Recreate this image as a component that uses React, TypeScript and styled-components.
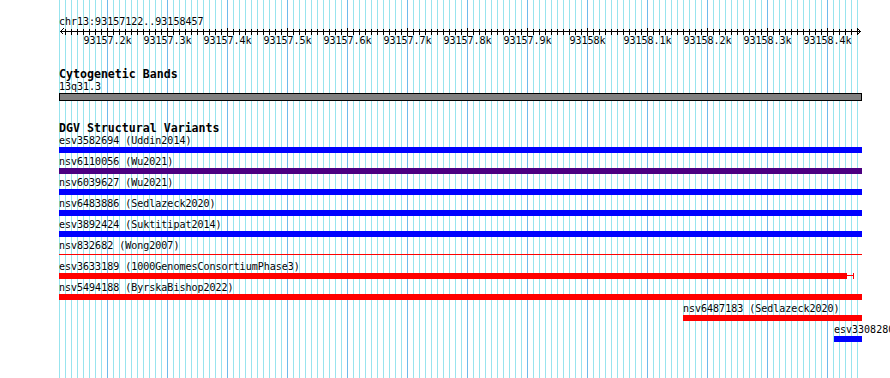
import React from 'react'
import styled, { createGlobalStyle } from 'styled-components'

// genome view: 93157122..93158457 drawn at 0.6 px/bp, view starts at x=59
const VIEW_X = 59
const VIEW_W = 803

type Feature = {
  label: string
  color: string
  x0: number
  x1: number
  thin?: boolean
  tail?: boolean
}

const features: Feature[] = [
  { label: 'esv3582694 (Uddin2014)', color: '#0000ff', x0: 59, x1: 862 },
  { label: 'nsv6110056 (Wu2021)', color: '#4b0082', x0: 59, x1: 862 },
  { label: 'nsv6039627 (Wu2021)', color: '#0000ff', x0: 59, x1: 862 },
  { label: 'nsv6483886 (Sedlazeck2020)', color: '#0000ff', x0: 59, x1: 862 },
  { label: 'esv3892424 (Suktitipat2014)', color: '#0000ff', x0: 59, x1: 862 },
  { label: 'nsv832682 (Wong2007)', color: '#ff0000', x0: 59, x1: 862, thin: true },
  { label: 'esv3633189 (1000GenomesConsortiumPhase3)', color: '#ff0000', x0: 59, x1: 847, tail: true },
  { label: 'nsv5494188 (ByrskaBishop2022)', color: '#ff0000', x0: 59, x1: 862 },
  { label: 'nsv6487183 (Sedlazeck2020)', color: '#ff0000', x0: 683, x1: 862 },
  { label: 'esv3308280 (Kidd2010)', color: '#0000ff', x0: 834, x1: 862 },
]

const tickLabels = [
  '93157.2k', '93157.3k', '93157.4k', '93157.5k', '93157.6k', '93157.7k', '93157.8k',
  '93157.9k', '93158k', '93158.1k', '93158.2k', '93158.3k', '93158.4k',
]

// every 10bp is 6px; labelled ticks fall on 48 + 60n
const isMajor = (x: number) => (x - 48) % 60 === 0

const GridLines: React.FC = () => {
  const lines = []
  for (let k = 0; k <= 133; k++) {
    const x = k * 6
    lines.push(
      <rect key={k} x={x} y={0} width={1} height={378} fill={isMajor(x) ? '#6fbaec' : '#98e4ee'} />
    )
  }
  return (
    <GridSvg width={VIEW_W} height={378} shapeRendering="crispEdges">
      {lines}
    </GridSvg>
  )
}

const Ruler: React.FC = () => {
  const ticks = []
  for (let k = 1; k <= 133; k++) {
    const x = k * 6
    const major = isMajor(x)
    ticks.push(<rect key={k} x={x} y={major ? 0 : 1} width={1} height={major ? 8 : 6} fill="#000" />)
  }
  return (
    <RulerSvg width={VIEW_W} height={21} shapeRendering="crispEdges">
      <rect x={1} y={3} width={801} height={1} fill="#000" />
      <polyline points="4.5,0.5 1.5,3.5 4.5,6.5" fill="none" stroke="#000" />
      <polyline points="798.5,0.5 801.5,3.5 798.5,6.5" fill="none" stroke="#000" />
      {ticks}
      {tickLabels.map((t, i) => (
        <RulerLabel key={t} x={48 + i * 60 + 0.5} y={16} textAnchor="middle">
          {t}
        </RulerLabel>
      ))}
    </RulerSvg>
  )
}

const App: React.FC = () => {
  return (
    <Page>
      <GlobalStyle />
      <View>
        <GridLines />
        <Content>
          <Location>chr13:93157122..93158457</Location>
          <Ruler />

          <Track $gap={18}>
            <TrackTitle>Cytogenetic Bands</TrackTitle>
            <Label>13q31.3</Label>
            <Band />
          </Track>

          <Track $gap={20}>
            <TrackTitle>DGV Structural Variants</TrackTitle>
            {features.map((f) => (
              <Row key={f.label}>
                <Label style={{ marginLeft: f.x0 - VIEW_X }}>{f.label}</Label>
                <BarSlot style={{ marginLeft: f.x0 - VIEW_X }}>
                  {f.thin ? (
                    <ThinBar $color={f.color} style={{ width: f.x1 - f.x0 }} />
                  ) : (
                    <Bar $color={f.color} style={{ width: f.x1 - f.x0 }} />
                  )}
                  {f.tail && <Tail $color={f.color} />}
                </BarSlot>
              </Row>
            ))}
          </Track>
        </Content>
      </View>
    </Page>
  )
}

const GlobalStyle = createGlobalStyle`
  html, body {
    margin: 0;
    padding: 0;
    background: #fff;
  }
`

const Page = styled.div({
  width: '890px',
  height: '378px',
  overflow: 'hidden',
  background: '#fff',
  paddingLeft: `${VIEW_X}px`,
  boxSizing: 'border-box',
  fontFamily: "'DejaVu Sans Mono', 'Liberation Mono', monospace",
  color: '#000',
})

const View = styled.div({
  position: 'relative',
  width: `${VIEW_W}px`,
  minHeight: '378px',
})

// grid sits underneath the tracks
const GridSvg = styled.svg({
  position: 'absolute',
  top: 0,
  left: 0,
  display: 'block',
})

const Content = styled.div({
  position: 'relative',
  display: 'flex',
  flexDirection: 'column',
})

const Location = styled.div({
  marginTop: '16px',
  fontSize: '10px',
  lineHeight: '12px',
  whiteSpace: 'nowrap',
})

const RulerSvg = styled.svg({
  display: 'block',
  overflow: 'visible',
})

const RulerLabel = styled.text({
  fontFamily: "'DejaVu Sans Mono', monospace",
  fontSize: '10px',
  fill: '#000',
})

const Track = styled.div<{ $gap: number }>`
  margin-top: ${(p) => p.$gap}px;
  display: flex;
  flex-direction: column;
`

const TrackTitle = styled.div({
  fontSize: '11.6px',
  fontWeight: 'bold',
  lineHeight: '14px',
  whiteSpace: 'nowrap',
})

const Label = styled.div({
  fontSize: '10px',
  lineHeight: '12px',
  whiteSpace: 'nowrap',
})

const Band = styled.div({
  height: '8px',
  boxSizing: 'border-box',
  border: '1px solid #000',
  background: '#808080',
})

const Row = styled.div({
  height: '21px',
  display: 'flex',
  flexDirection: 'column',
})

const BarSlot = styled.div({
  height: '6px',
  display: 'flex',
})

const Bar = styled.div<{ $color: string }>`
  height: 6px;
  background: ${(p) => p.$color};
`

const ThinBar = styled.div<{ $color: string }>`
  height: 6px;
  background: linear-gradient(${(p) => p.$color}, ${(p) => p.$color}) 0 2px / 100% 1px no-repeat;
`

const Tail = styled.span<{ $color: string }>`
  width: 6px;
  height: 6px;
  border-right: 1px solid ${(p) => p.$color};
  background: linear-gradient(${(p) => p.$color}, ${(p) => p.$color}) 0 2px / 100% 1px no-repeat;
`

export default App
